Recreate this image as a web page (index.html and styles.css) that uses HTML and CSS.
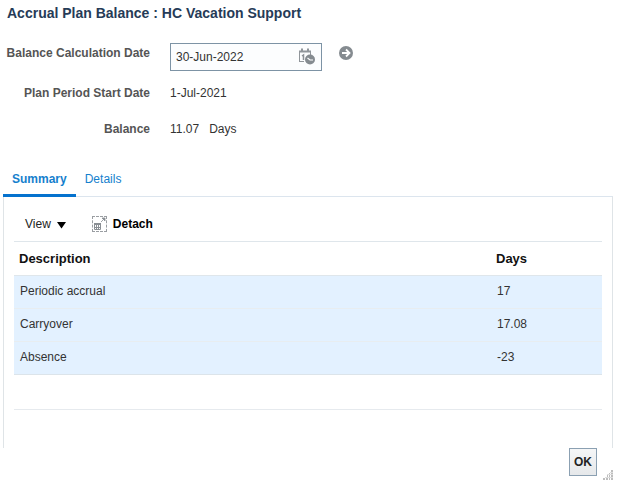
FILE: index.html
```html
<!DOCTYPE html>
<html lang="en">
<head>
    <meta charset="UTF-8">
    <meta name="viewport" content="width=device-width, initial-scale=1.0">
    <title>Accrual Plan Balance</title>
    <link rel="stylesheet" href="styles.css">
</head>
<body>
    <div class="dialog">
        <h1>Accrual Plan Balance : HC Vacation Support</h1>

        <!-- Balance fields -->
        <form class="fields">
            <label class="date-label" for="calcDate">Balance Calculation Date</label>
            <div class="date-row">
                <div class="date-box">
                    <input type="text" id="calcDate" value="30-Jun-2022">
                    <button type="button" class="icon-button" aria-label="Select date and time">
                        <svg width="18" height="18" viewBox="0 0 18 18">
                            <path d="M1.500 13.500V3M12.500 3v4M1 13.500h5" fill="none" stroke="#90959a"/>
                            <path d="M1 2.500h12v2H1zM3 .5h2v3H3zM9 .5h2v3H9z" fill="#90959a"/>
                            <path d="M4 8l1.500-1v5" fill="none" stroke="#8b9095" stroke-width="1.500"/>
                            <circle cx="12" cy="11.500" r="5" fill="#858b90"/>
                            <path d="M9.500 10l2.500 2h3" fill="none" stroke="#fff" stroke-width="1.200"/>
                        </svg>
                    </button>
                </div>
                <button type="button" class="icon-button" aria-label="Go">
                    <svg width="16" height="16" viewBox="0 0 16 16">
                        <circle cx="8" cy="7" r="7" fill="#858b90"/>
                        <path d="M4 7h7M8 3.500L11.500 7 8 10.500" fill="none" stroke="#fff" stroke-width="1.800"/>
                    </svg>
                </button>
            </div>
            <span class="label">Plan Period Start Date</span>
            <span>1-Jul-2021</span>
            <span class="label">Balance</span>
            <span class="balance"><span>11.07</span><span>Days</span></span>
        </form>

        <nav class="tabs">
            <a class="active" href="#summary">Summary</a>
            <a href="#details">Details</a>
        </nav>

        <div class="panel" id="summary">
            <div class="toolbar">
                <button type="button" class="view">View
                    <svg width="10" height="10" viewBox="0 0 10 10"><path d="M1 3h9L5.500 9.500z" fill="#000"/></svg>
                </button>
                <button type="button" class="detach">
                    <svg width="15" height="16" viewBox="0 0 15 16" fill="none" stroke="#8a8f94">
                        <path d="M0 .5h15M0 15.500h15" stroke="#9a9ea2" stroke-dasharray="3 1"/>
                        <path d="M.5 0v16M14.500 0v16" stroke="#9a9ea2" stroke-dasharray="3 1.300"/>
                        <path d="M2 7h7v2H2z" fill="#8a8f94" stroke="none"/>
                        <path d="M2.500 8v5.500h6V8M2 11.500h7M4.500 8v6M6.500 8v6"/>
                        <path d="M9 6l2.500-2.500M10 2h3v3z" fill="#8a8f94" stroke-width=".8"/>
                    </svg>
                    Detach
                </button>
            </div>
            <table>
                <thead>
                    <tr><th>Description</th><th class="days">Days</th></tr>
                </thead>
                <tbody>
                    <tr><td>Periodic accrual</td><td>17</td></tr>
                    <tr><td>Carryover</td><td>17.08</td></tr>
                    <tr><td>Absence</td><td>-23</td></tr>
                </tbody>
            </table>
            <div class="table-footer"></div>
        </div>

        <div class="actions">
            <button type="button" class="ok">OK</button>
            <svg class="grip" width="10" height="10" viewBox="0 0 10 10">
                <path d="M8 0h2v2H8zM6 3h1v1H6zM8 3h2v1H8zM4 5h1v2H4zM6 5h1v2H6zM8 5h2v2H8zM0 8h2v2H0zM3 8h2v2H3zM6 8h1v2H6zM8 8h2v2H8z" fill="#bdbdbd"/>
                <path d="M7 2h3v1H7zM4 4h6v1H4zM2 7h8v1H2z" fill="#dedede"/>
            </svg>
        </div>
    </div>
</body>
</html>
```
FILE: styles.css
```css
* {
    box-sizing: border-box;
}

body {
    margin: 0;
    background-color: #fff;
    font-family: "Liberation Sans", Arial, sans-serif;
    font-size: 12px;
    line-height: 16px;
    color: #333;
}

button {
    padding: 0;
    border: 0;
    background: none;
    font: inherit;
    color: inherit;
    cursor: pointer;
}

svg {
    display: block;
}

.dialog {
    padding: 5px 5px 5px 3px;
}

h1 {
    margin: 0 0 22px 4px;
    font-size: 14px;
    line-height: 16px;
    color: #263b57;
}

/* Label and value columns */
.fields {
    display: grid;
    grid-template-columns: 147px 1fr;
    column-gap: 20px;
    row-gap: 20px;
    margin-bottom: 32px;
}

.fields label,
.label {
    font-weight: bold;
    text-align: right;
    white-space: nowrap;
    color: #555;
}

.date-label {
    padding-top: 2px;
}

.date-row {
    display: flex;
    align-items: center;
    gap: 16px;
    height: 22px;
}

.date-box {
    display: flex;
    align-items: center;
    width: 152px;
    height: 28px;
    margin-top: 6px;
    padding: 0 5px;
    border: 1px solid #7d93a5;
    background-color: #fcfdfe;
}

.date-box input {
    flex: 1;
    min-width: 0;
    padding: 0;
    border: 0;
    outline: 0;
    background: none;
    font: inherit;
    color: #333;
}

.balance {
    display: flex;
    gap: 10px;
}

/* Tabs */
.tabs {
    display: flex;
}

.tabs a {
    padding: 2px 9px 7px;
    border-bottom: 3px solid transparent;
    color: #1580cd;
    text-decoration: none;
}

.tabs .active {
    border-color: #0572ce;
    font-weight: bold;
}

.panel {
    min-height: 252px;
    margin-top: -1px;
    padding: 0 10px;
    border: 1px solid #dfe4e7;
    border-top-color: #dce5ee;
    border-bottom: 0;
}

.toolbar {
    display: flex;
    align-items: center;
    gap: 26px;
    height: 45px;
    padding: 9px 11px 0;
    border-bottom: 1px solid #dfe6eb;
    color: #000;
}

.toolbar button {
    display: flex;
    align-items: center;
    gap: 6px;
}

.toolbar .view {
    gap: 5px;
    color: #222;
}

.toolbar .detach {
    font-weight: bold;
}

/* Accrual table */
table {
    width: 100%;
    border-collapse: collapse;
    table-layout: fixed;
}

th,
td {
    height: 33px;
    padding: 0 6px 1px;
    text-align: left;
    border-bottom: 1px solid #e8edf0;
}

th {
    padding: 1px 5px 0;
    border-color: #dfe6eb;
    font-size: 13px;
    color: #111;
}

.days {
    width: 111px;
}

tbody {
    background-color: #e3f1ff;
}

tbody tr:last-child td {
    border-color: #dce4ea;
}

.table-footer {
    height: 35px;
    border-bottom: 1px solid #e6eaee;
}

.actions {
    display: flex;
    justify-content: flex-end;
    align-items: flex-end;
    gap: 6px;
}

.ok {
    width: 28px;
    height: 28px;
    margin-bottom: 4px;
    border: 1px solid #8ba0b2;
    background: linear-gradient(#f5f6f7, #e6e8ea);
    font-weight: bold;
    color: #222;
}
```
